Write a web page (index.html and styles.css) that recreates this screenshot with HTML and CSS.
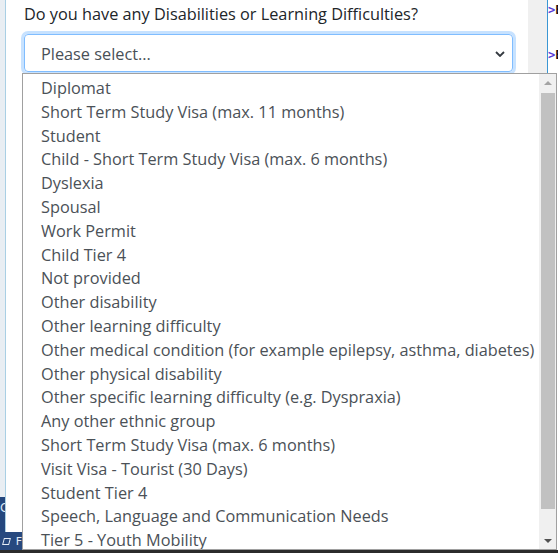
FILE: index.html
```html
<!DOCTYPE html>
<html lang="en">
<head>
<meta charset="utf-8">
<title>Form</title>
<link rel="stylesheet" href="styles.css">
</head>
<body>
<div class="window">
  <aside class="chrome">
    <div class="chrome-top">
      <div class="chrome-rail"></div>
      <div class="chrome-panel"></div>
    </div>
    <div class="chrome-mid">
      <div class="chrome-rail dark"><span class="chrome-c">C</span></div>
      <div class="chrome-panel"></div>
    </div>
    <div class="chrome-bottom"><span class="chrome-icon"></span><span class="chrome-f">F</span></div>
  </aside>
  <main class="main">
    <label class="label">Do you have any Disabilities or Learning Difficulties?</label>
    <div class="select">
      <span class="select-text">Please select...</span>
      <svg class="chevron" width="10" height="6" viewBox="0 0 10 6"><path d="M1 1 L5 5 L9 1" fill="none" stroke="#343a40" stroke-width="1.8"/></svg>
    </div>
  </main>
  <div class="gutter"></div>
  <div class="code">
    <div class="code-line"><span class="lt">&gt;</span>E</div>
    <div class="code-line second"><span class="lt">&gt;</span>E</div>
  </div>
  <div class="dropdown">
    <ul class="options">
      <li>Diplomat</li>
      <li>Short Term Study Visa (max. 11 months)</li>
      <li>Student</li>
      <li>Child - Short Term Study Visa (max. 6 months)</li>
      <li>Dyslexia</li>
      <li>Spousal</li>
      <li>Work Permit</li>
      <li>Child Tier 4</li>
      <li>Not provided</li>
      <li>Other disability</li>
      <li>Other learning difficulty</li>
      <li>Other medical condition (for example epilepsy, asthma, diabetes)</li>
      <li>Other physical disability</li>
      <li>Other specific learning difficulty (e.g. Dyspraxia)</li>
      <li>Any other ethnic group</li>
      <li>Short Term Study Visa (max. 6 months)</li>
      <li>Visit Visa - Tourist (30 Days)</li>
      <li>Student Tier 4</li>
      <li>Speech, Language and Communication Needs</li>
      <li>Tier 5 - Youth Mobility</li>
    </ul>
    <div class="scrollbar">
      <div class="arrow up"></div>
      <div class="track"><div class="thumb"></div></div>
      <div class="arrow down"></div>
    </div>
  </div>
  <div class="taskbar-line"></div>
</div>
</body>
</html>
```
FILE: styles.css
```css
* { box-sizing: border-box; }
html, body { margin: 0; padding: 0; }
body {
  width: 558px;
  height: 553px;
  overflow: hidden;
  background: #ffffff;
  font-family: "Open Sans", "Noto Sans", sans-serif;
}
.window {
  position: relative;
  display: flex;
  width: 558px;
  height: 553px;
}
.chrome {
  width: 22px;
  flex: none;
  display: flex;
  flex-direction: column;
}
.chrome-top, .chrome-mid { display: flex; }
.chrome-top { height: 497px; }
.chrome-mid { height: 35px; }
.chrome-rail {
  width: 5px;
  background: #e9eef3;
}
.chrome-rail.dark {
  background: #24477e;
  color: #dbe6f3;
  font: 12px "DejaVu Sans", sans-serif;
  overflow: hidden;
  padding-top: 4px;
}
.chrome-c { display: block; margin-left: 0; }
.chrome-panel {
  flex: 1;
  border-left: 1px solid #a9cfe4;
  background: #ffffff;
}
.chrome-bottom {
  flex: 1;
  background: #27497f;
  display: flex;
  align-items: center;
  gap: 6px;
  padding-left: 3px;
  padding-bottom: 3px;
  color: #e3ebf5;
  font: 11px "DejaVu Sans", sans-serif;
}
.chrome-icon {
  width: 8px;
  height: 7px;
  border: 1px solid #e3ebf5;
  transform: skewX(-15deg);
}
.main {
  width: 506px;
  flex: none;
  padding: 2px 0 0 2px;
}
.label {
  display: block;
  font-size: 16.3px;
  line-height: 24px;
  color: #212529;
  margin-bottom: 8px;
}
.select {
  width: 489px;
  height: 38px;
  border: 1px solid #80bdff;
  border-radius: 4px;
  box-shadow: 0 0 0 3px rgba(0, 123, 255, 0.22);
  display: flex;
  align-items: center;
  justify-content: space-between;
  padding: 2px 7px 0 16px;
  color: #495057;
  font-size: 16.3px;
}
.chevron { margin-top: 0; }
.gutter {
  width: 20px;
  flex: none;
  background: #f0f0f0;
  border-right: 1px solid #3a97d4;
}
.code {
  flex: 1;
  font: bold 12px "DejaVu Sans Mono", monospace;
  color: #111;
  padding-top: 3px;
}
.code-line { line-height: 14px; }
.code-line.second { margin-top: 31px; }
.lt { color: #5a3ad6; }
.dropdown {
  position: absolute;
  left: 22px;
  top: 73px;
  width: 535px;
  height: 477px;
  border: 1px solid #a0a0a0;
  background: #ffffff;
  display: flex;
}
.options {
  flex: 1;
  list-style: none;
  margin: 0;
  padding: 3px 0 0 18px;
  overflow: hidden;
  color: #4b5157;
  font-size: 16.3px;
  line-height: 23.8px;
}
.options li { white-space: nowrap; }
.scrollbar {
  width: 17px;
  flex: none;
  background: #f0f0f0;
  display: flex;
  flex-direction: column;
}
.arrow {
  height: 17px;
  display: flex;
  align-items: center;
  justify-content: center;
}
.arrow::before {
  content: "";
  width: 0;
  height: 0;
  border-left: 4px solid transparent;
  border-right: 4px solid transparent;
}
.arrow.up::before { border-bottom: 4px solid #a3a3a3; }
.arrow.down::before { border-top: 4px solid #505050; }
.track {
  flex: 1;
  padding: 2px 1px 23px 2px;
  display: flex;
}
.thumb {
  flex: 1;
  background: #c1c1c1;
}
.taskbar-line {
  position: absolute;
  left: 0;
  right: 0;
  bottom: 0;
  height: 3px;
  background: #2b2b2b;
}
```
